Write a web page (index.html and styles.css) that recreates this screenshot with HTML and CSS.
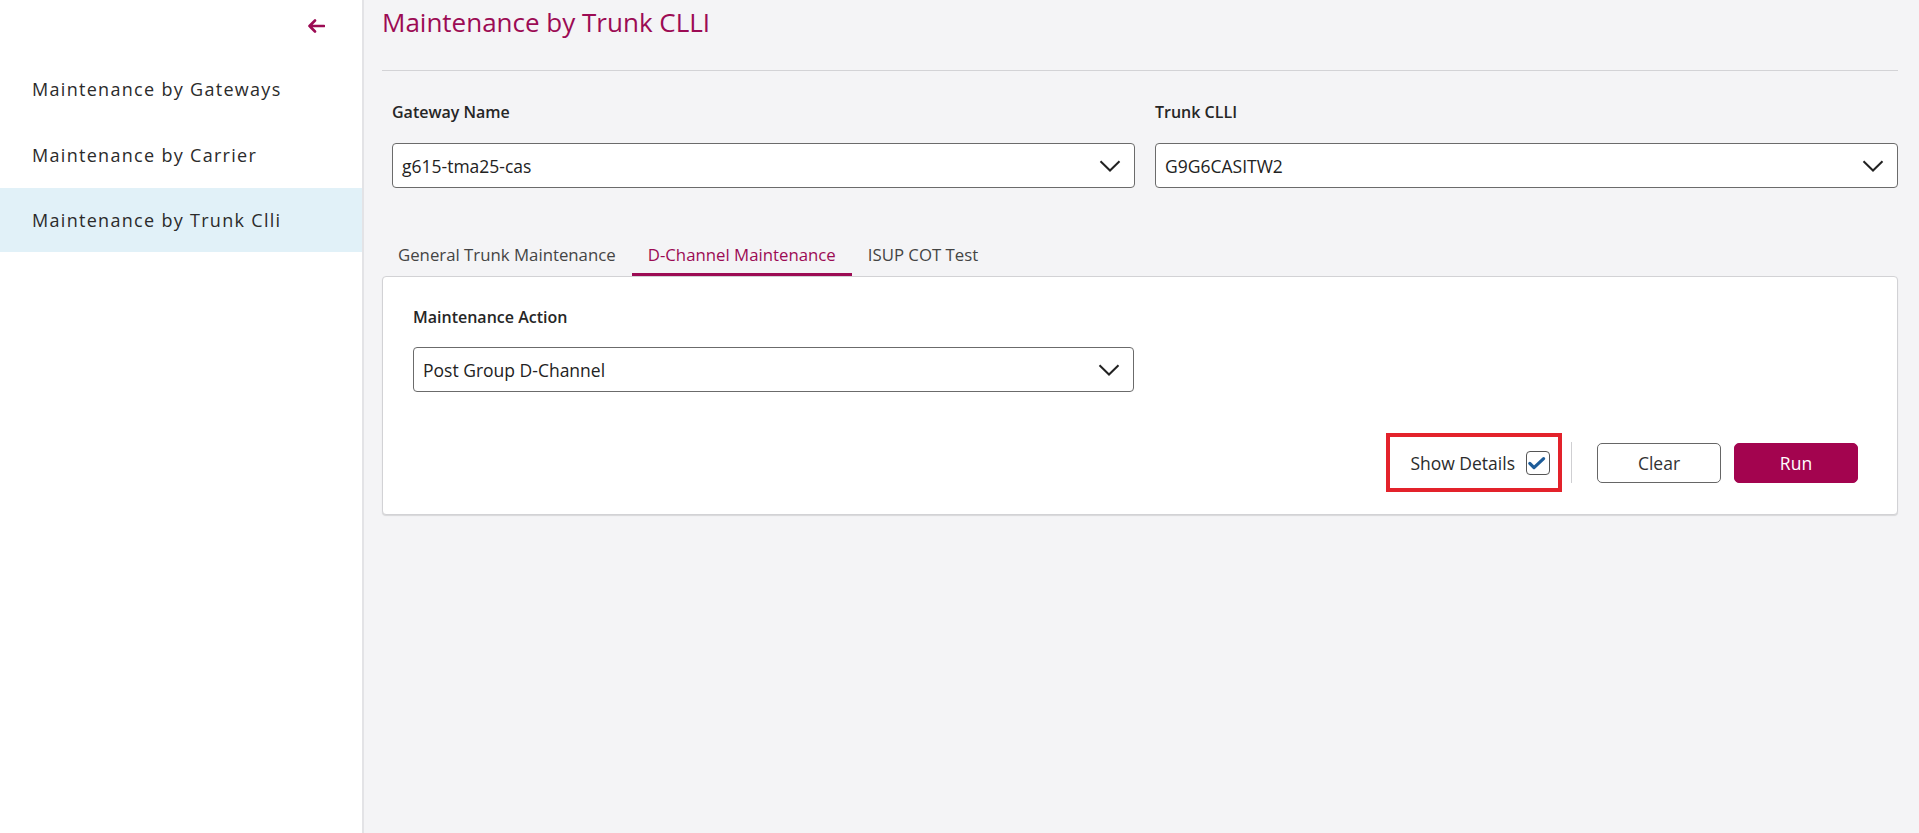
FILE: index.html
```html
<!DOCTYPE html>
<html lang="en">
<head>
<meta charset="utf-8">
<title>Maintenance by Trunk CLLI</title>
<link rel="stylesheet" href="styles.css">
</head>
<body>
<div class="app">
  <aside class="sidebar">
    <div class="sidebar-top">
      <button class="back-btn" aria-label="Collapse">
        <svg width="18" height="14" viewBox="0 0 18 14"><path d="M17 7H2.5M8 1.5L2.5 7L8 12.5" fill="none" stroke="#9c0b54" stroke-width="2.6" stroke-linecap="round" stroke-linejoin="round"/></svg>
      </button>
    </div>
    <nav class="nav">
      <div class="nav-item">Maintenance by Gateways</div>
      <div class="nav-item">Maintenance by Carrier</div>
      <div class="nav-item active">Maintenance by Trunk Clli</div>
    </nav>
  </aside>
  <main class="main">
    <h1 class="page-title">Maintenance by Trunk CLLI</h1>
    <div class="divider"></div>
    <div class="field-row">
      <div class="field">
        <label class="field-label">Gateway Name</label>
        <div class="select">
          <span>g615-tma25-cas</span>
          <svg class="chev" width="22" height="12" viewBox="0 0 22 12"><path d="M1.5 1.2L11 10.5L20.5 1.2" fill="none" stroke="#222" stroke-width="2"/></svg>
        </div>
      </div>
      <div class="field">
        <label class="field-label">Trunk CLLI</label>
        <div class="select">
          <span>G9G6CASITW2</span>
          <svg class="chev" width="22" height="12" viewBox="0 0 22 12"><path d="M1.5 1.2L11 10.5L20.5 1.2" fill="none" stroke="#222" stroke-width="2"/></svg>
        </div>
      </div>
    </div>
    <div class="tabs">
      <div class="tab">General Trunk Maintenance</div>
      <div class="tab active">D-Channel Maintenance</div>
      <div class="tab">ISUP COT Test</div>
    </div>
    <section class="panel">
      <div class="field panel-field">
        <label class="field-label">Maintenance Action</label>
        <div class="select">
          <span>Post Group D-Channel</span>
          <svg class="chev" width="22" height="12" viewBox="0 0 22 12"><path d="M1.5 1.2L11 10.5L20.5 1.2" fill="none" stroke="#222" stroke-width="2"/></svg>
        </div>
      </div>
      <div class="actions">
        <div class="show-details">
          <span>Show Details</span>
          <span class="checkbox">
            <svg width="22" height="22" viewBox="0 0 22 22"><path d="M2.8 11.4L7 15.6L16.6 6.6" fill="none" stroke="#1d5c99" stroke-width="3.2" stroke-linecap="round" stroke-linejoin="round"/></svg>
          </span>
        </div>
        <div class="sep"></div>
        <button class="btn btn-outline">Clear</button>
        <button class="btn btn-primary">Run</button>
      </div>
    </section>
  </main>
</div>
</body>
</html>
```
FILE: styles.css
```css
* { box-sizing: border-box; }
html, body { margin: 0; padding: 0; }
body {
  font-family: "Open Sans", "Noto Sans", "Liberation Sans", sans-serif;
  color: #2b2b2b;
  background: #f4f4f6;
}
.app {
  display: flex;
  height: 100vh;
  min-height: 833px;
}
.sidebar {
  width: 364px;
  flex: 0 0 364px;
  background: #fff;
  border-right: 2px solid #e3e3e6;
}
.sidebar-top {
  height: 60px;
  display: flex;
  justify-content: flex-end;
  padding: 19px 37px 0 0;
}
.back-btn {
  background: none;
  border: 0;
  padding: 0;
  width: 18px;
  height: 14px;
  display: flex;
  cursor: pointer;
}
.nav-item {
  height: 64px;
  display: flex;
  align-items: center;
  padding-left: 32px;
  padding-bottom: 2px;
  font-size: 18px;
  letter-spacing: 1.3px;
  color: #2b2b2b;
}
.nav-item:first-child { padding-bottom: 6px; }
.nav-item.active { background: #e1f1f8; padding-bottom: 0; }

.main {
  flex: 1;
  padding: 0 21px 0 18px;
  min-width: 0;
}
.page-title {
  margin: 0;
  padding-top: 5px;
  font-size: 26px;
  line-height: 35px;
  font-weight: 500;
  color: #9c0b54;
}
.divider {
  margin-top: 30px;
  border-top: 1px solid #d3d3d6;
}
.field-row {
  display: flex;
  gap: 20px;
  padding-left: 10px;
  margin-top: 30px;
}
.field { flex: 1; min-width: 0; }
.field-label {
  display: block;
  font-size: 16px;
  line-height: 22px;
  font-weight: 600;
  color: #262626;
  margin-bottom: 20px;
}
.select {
  height: 45px;
  background: #fff;
  border: 1px solid #6b6b6b;
  border-radius: 4px;
  display: flex;
  align-items: center;
  justify-content: space-between;
  padding: 0 13px 0 9px;
  font-size: 17.5px;
  color: #222;
}
.chev { flex: none; }

.tabs {
  display: flex;
  margin-top: 48px;
}
.tab {
  padding: 8px 16px 7px;
  font-size: 16.8px;
  line-height: 22px;
  color: #444;
  border-bottom: 3px solid transparent;
}
.tab.active {
  color: #9c0b54;
  border-bottom-color: #9c0b54;
}
.panel {
  background: #fff;
  border: 1px solid #d2d2d5;
  border-radius: 4px;
  box-shadow: 0 1px 1px rgba(0,0,0,0.12);
  padding: 29px 39px 22px 30px;
}
.panel-field {
  width: 721px;
}
.panel-field .field-label { margin-bottom: 19px; }
.actions {
  margin-top: 41px;
  display: flex;
  justify-content: flex-end;
  align-items: center;
}
.show-details {
  display: flex;
  align-items: center;
  gap: 11px;
  height: 59px;
  padding: 0 8px 0 20px;
  border: 4px solid #e3222b;
  font-size: 17.5px;
  color: #2b2b2b;
}
.checkbox {
  width: 24px;
  height: 24px;
  border: 1.5px solid #555;
  border-radius: 4px;
  display: flex;
  align-items: center;
  justify-content: center;
  background: #fff;
}
.checkbox svg { display: block; }
.sep {
  width: 1px;
  height: 41px;
  background: #cfcfd2;
  margin: 0 25px 0 9px;
}
.btn {
  width: 124px;
  height: 40px;
  border-radius: 5px;
  font-family: inherit;
  font-size: 17.5px;
  cursor: pointer;
}
.btn-outline {
  background: #fff;
  border: 1px solid #666;
  color: #333;
  margin-right: 13px;
}
.btn-primary {
  background: #a3044f;
  border: 1px solid #a3044f;
  color: #fff;
}
```
